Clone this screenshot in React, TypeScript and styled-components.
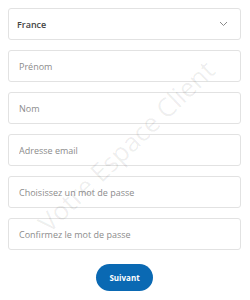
import React from "react";
import styled, { createGlobalStyle } from "styled-components";

const GlobalStyle = createGlobalStyle`
  html, body {
    margin: 0;
    padding: 0;
    background: #fff;
  }
  body {
    font-family: "Open Sans", "Noto Sans", sans-serif;
  }
`;

const fields = [
  "Prénom",
  "Nom",
  "Adresse email",
  "Choisissez un mot de passe",
  "Confirmez le mot de passe",
];

export default function App() {
  return (
    <>
      <GlobalStyle />
      <Page>
        <Form>
          <SelectBox>
            <SelectValue>France</SelectValue>
            <Chevron width="9" height="6" viewBox="0 0 9 6">
              <path d="M1 1l3.5 3.5L8 1" fill="none" stroke="#8a8a8a" strokeWidth="1" />
            </Chevron>
          </SelectBox>
          {fields.map((f) => (
            <Field key={f} placeholder={f} />
          ))}
          <ButtonRow>
            <Submit>Suivant</Submit>
          </ButtonRow>
        </Form>
        <Watermark>Votre Espace Client</Watermark>
      </Page>
    </>
  );
}

const Page = styled.div`
  position: relative;
  width: 250px;
  height: 300px;
  overflow: hidden;
`;

const Form = styled.div`
  display: flex;
  flex-direction: column;
  gap: 10px;
  padding: 8px 9px 0 8px;
`;

const SelectBox = styled.div`
  height: 32px;
  box-sizing: border-box;
  border: 1px solid #e2e2e2;
  border-radius: 3px;
  display: flex;
  align-items: center;
  justify-content: space-between;
  padding: 0 12px 0 8px;
`;

const SelectValue = styled.span`
  font-size: 9px;
  font-weight: 600;
  color: #444;
`;

const Chevron = styled.svg`
  display: block;
`;

const Field = styled.input`
  height: 32px;
  box-sizing: border-box;
  border: 1px solid #e2e2e2;
  border-radius: 3px;
  padding: 0 10px;
  font-family: "Open Sans", "Noto Sans", sans-serif;
  font-size: 9px;
  color: #333;
  outline: none;
  &::placeholder {
    color: #8c8c8c;
  }
`;

const ButtonRow = styled.div`
  display: flex;
  justify-content: center;
  padding-top: 4px;
`;

const Submit = styled.button`
  width: 57px;
  height: 27px;
  border: none;
  border-radius: 14px;
  background: #0a69b3;
  color: #fff;
  font-family: "Open Sans", "Noto Sans", sans-serif;
  font-size: 8px;
  font-weight: 700;
  cursor: pointer;
`;

const Watermark = styled.div`
  position: absolute;
  left: 126px;
  top: 146px;
  transform: translate(-50%, -50%) rotate(-44deg);
  white-space: nowrap;
  font-family: "Open Sans", "Noto Sans", sans-serif;
  font-size: 26px;
  color: rgba(0, 0, 0, 0.07);
  pointer-events: none;
`;
